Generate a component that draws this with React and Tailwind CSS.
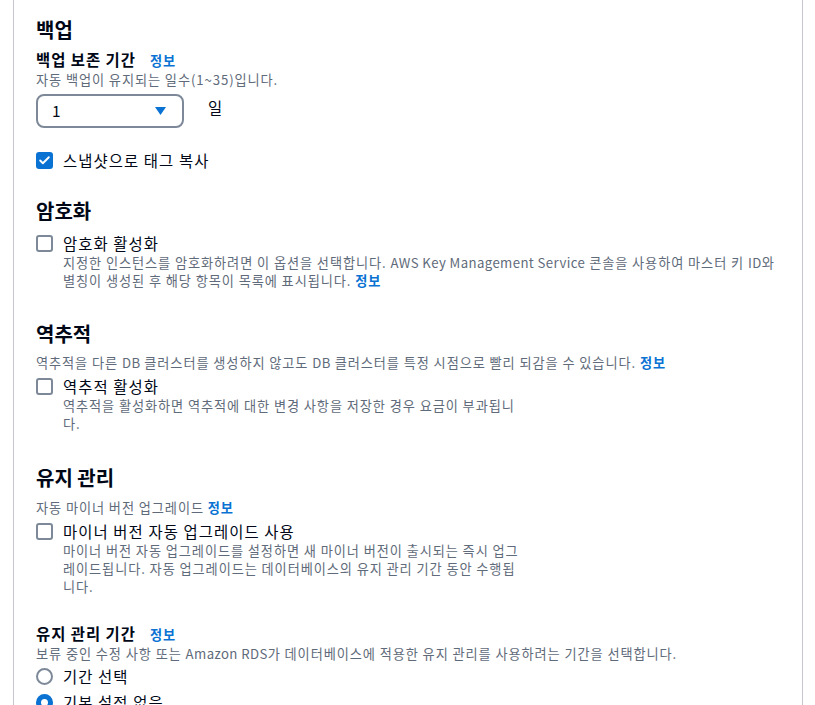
import { Check } from 'lucide-react'

const FONT = { fontFamily: '"Noto Sans CJK KR", "Noto Sans", sans-serif' }

function Info({ className = 'ml-[14px]' }) {
  return <span className={`${className} text-[13.2px] font-bold tracking-[0.9px] text-[#0972d3]`}>정보</span>
}

// latin runs in the reference are tighter than the hangul
function L({ children }) {
  return <span className="tracking-[0.4px]">{children}</span>
}

function Heading({ children, className = '' }) {
  return <h2 className={`text-[20px] font-bold leading-[24px] text-[#000716] ${className}`}>{children}</h2>
}

function Desc({ children, className = '' }) {
  return <p className={`text-[13.2px] leading-[18px] tracking-[0.9px] text-[#5f6b7a] ${className}`}>{children}</p>
}

function Checkbox({ checked, label, children, descClass = '' }) {
  return (
    <div className="flex gap-[10px]">
      <div className="pt-[3px]">
        {checked ? (
          <span className="flex h-[17px] w-[17px] items-center justify-center rounded-[3px] bg-[#0972d3]">
            <Check size={13} strokeWidth={3.5} color="#fff" />
          </span>
        ) : (
          <span className="block h-[17px] w-[17px] rounded-[3px] border-2 border-[#7d8998] bg-white" />
        )}
      </div>
      <div>
        <div className="text-[15.4px] leading-[22px] tracking-[1.1px] text-[#000716]">{label}</div>
        {children && <Desc className={descClass}>{children}</Desc>}
      </div>
    </div>
  )
}

function Radio({ checked, label }) {
  return (
    <div className="flex items-center gap-[10px]">
      {checked ? (
        <span className="block h-[17px] w-[17px] rounded-full border-[5px] border-[#0972d3] bg-white" />
      ) : (
        <span className="block h-[17px] w-[17px] rounded-full border-2 border-[#7d8998] bg-white" />
      )}
      <span className="text-[15.4px] leading-[22px] tracking-[1.1px] text-[#000716]">{label}</span>
    </div>
  )
}

export default function App() {
  return (
    <div style={FONT} className="h-[705px] overflow-hidden bg-white">
      <div className="ml-[13px] w-[790px] border-x border-[#c6c6cd] px-[22px] pt-[18px] pb-10">
        {/* 백업 */}
        <Heading>백업</Heading>
        <div className="mt-[7px] text-[15.4px] font-bold leading-[20px] tracking-[1px] text-[#000716]">
          백업 보존 기간<Info />
        </div>
        <Desc>자동 백업이 유지되는 일수(1~35)입니다.</Desc>
        <div className="mt-[5px] flex items-center">
          <div className="flex h-[34px] w-[148px] items-center justify-between rounded-[8px] border-2 border-[#7d8998] pl-[14px] pr-[16px]">
            <span className="text-[15.4px] text-[#000716]">1</span>
            <svg width="11" height="8" viewBox="0 0 11 8">
              <path d="M0 0h11L5.5 8z" fill="#0972d3" />
            </svg>
          </div>
          <span className="ml-6 -mt-[6px] text-[15.4px] text-[#000716]">일</span>
        </div>
        <div className="mt-[21px]">
          <Checkbox checked label="스냅샷으로 태그 복사" />
        </div>

        {/* 암호화 */}
        <Heading className="mt-[28px]">암호화</Heading>
        <div className="mt-[9px]">
          <Checkbox label="암호화 활성화">
            지정한 인스턴스를 암호화하려면 이 옵션을 선택합니다. <L>AWS Key Management Service</L> 콘솔을 사용하여 마스터 키 <L>ID</L>와 별칭이 생성된 후 해당 항목이 목록에 표시됩니다. <Info className="" />
          </Checkbox>
        </div>

        {/* 역추적 */}
        <Heading className="mt-[32px]">역추적</Heading>
        <Desc className="mt-[8px]">
          역추적을 다른 <L>DB</L> 클러스터를 생성하지 않고도 <L>DB</L> 클러스터를 특정 시점으로 빨리 되감을 수 있습니다. <span className="font-bold text-[#0972d3]">정보</span>
        </Desc>
        <div className="mt-[3px]">
          <Checkbox label="역추적 활성화" descClass="max-w-[462px]">
            역추적을 활성화하면 역추적에 대한 변경 사항을 저장한 경우 요금이 부과됩니다.
          </Checkbox>
        </div>

        {/* 유지 관리 */}
        <Heading className="mt-[33px]">유지 관리</Heading>
        <Desc className="mt-[9px]">
          자동 마이너 버전 업그레이드 <span className="font-bold text-[#0972d3]">정보</span>
        </Desc>
        <div className="mt-[3px]">
          <Checkbox label="마이너 버전 자동 업그레이드 사용" descClass="max-w-[462px]">
            마이너 버전 자동 업그레이드를 설정하면 새 마이너 버전이 출시되는 즉시 업그레이드됩니다. 자동 업그레이드는 데이터베이스의 유지 관리 기간 동안 수행됩니다.
          </Checkbox>
        </div>

        <div className="mt-[27px] text-[15.4px] font-bold leading-[20px] tracking-[1px] text-[#000716]">
          유지 관리 기간<Info />
        </div>
        <Desc>
          보류 중인 수정 사항 또는 <L>Amazon RDS</L>가 데이터베이스에 적용한 유지 관리를 사용하려는 기간을 선택합니다.
        </Desc>
        <div className="mt-[2px] flex flex-col gap-[4px]">
          <Radio label="기간 선택" />
          <Radio checked label="기본 설정 없음" />
        </div>
      </div>
    </div>
  )
}
